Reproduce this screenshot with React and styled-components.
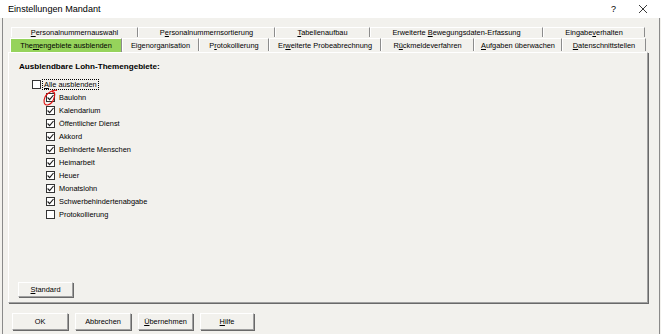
import styled, { createGlobalStyle } from 'styled-components'

const GlobalStyle = createGlobalStyle`
    * { box-sizing: border-box; }
    html, body {
        margin: 0;
        padding: 0;
        background: #f2f1ed;
    }
    body {
        font-family: "Liberation Sans", Arial, sans-serif;
        font-size: 7.4px;
        color: #000;
    }
`

const Window = styled.div`
    width: 661px;
    height: 334px;
    display: flex;
    flex-direction: column;
    background: #f2f1ed;
    overflow: hidden;
`

const TitleBar = styled.div`
    height: 18px;
    flex: none;
    display: flex;
    align-items: center;
    justify-content: space-between;
    padding: 0 13px 0 8px;
    background: #fff;
    font-size: 9.1px;
`

const TitleControls = styled.div`
    display: flex;
    align-items: center;
    gap: 22px;
    font-size: 9px;
`

const Frame = styled.div`
    flex: 1;
    display: flex;
    flex-direction: column;
    margin: 0 1px 0 2px;
    padding: 9px 11px 4px 5px;
    border-left: 1px solid #8a8a8a;
    border-right: 1px solid #8a8a8a;
`

const TabRow = styled.div`
    display: flex;
    height: ${(p) => p.$h}px;
    margin-left: ${(p) => p.$indent}px;
`

const Tab = styled.div`
    width: ${(p) => p.$w}px;
    display: flex;
    align-items: center;
    justify-content: center;
    white-space: nowrap;
    background: ${(p) => (p.$active ? '#96d35b' : 'transparent')};
    border-top: 1px solid #fff;
    border-left: 1px solid #fff;
    border-right: 1px solid #8c8c8c;
    margin-bottom: ${(p) => (p.$active ? 0 : 1)}px;
`

const Mn = styled.u`
    text-decoration: underline;
    text-underline-offset: 1px;
`

const Panel = styled.div`
    flex: 1;
    display: flex;
    flex-direction: column;
    padding: 9px 12px 5px 10px;
    border-top: 1px solid #fff;
    border-left: 1px solid #fff;
    border-right: 1px solid #a0a0a0;
    border-bottom: 1px solid #a0a0a0;
    box-shadow: 1px 1px 0 #696969;
`

const Heading = styled.div`
    font-weight: bold;
    font-size: 8.1px;
    line-height: 10px;
    margin-bottom: 6px;
`

const CheckList = styled.div`
    display: flex;
    flex-direction: column;
    padding-left: 13px;
`

const CheckRow = styled.div`
    position: relative;
    display: flex;
    align-items: center;
    gap: ${(p) => (p.$focus ? 2 : 3)}px;
    height: 13px;
    padding-left: ${(p) => (p.$indent ? 14 : 0)}px;
`

const Box = styled.span`
    width: 9px;
    height: 9px;
    flex: none;
    display: flex;
    align-items: center;
    justify-content: center;
    background: #fff;
    border: 1px solid #333;
`

const Label = styled.span`
    white-space: nowrap;
    line-height: 9px;
    padding: 0 1px;
    outline: ${(p) => (p.$focus ? '1px dotted #000' : 'none')};
`

const Annotation = styled.svg`
    position: absolute;
    left: 10px;
    top: -2px;
    z-index: 1;
    overflow: visible;
    pointer-events: none;
`

const Button = styled.div`
    width: ${(p) => p.$w}px;
    height: ${(p) => p.$h}px;
    display: flex;
    align-items: center;
    justify-content: center;
    background: #f2f1ed;
    border-top: 1px solid #fff;
    border-left: 1px solid #fff;
    border-right: 1px solid #a0a0a0;
    border-bottom: 1px solid #a0a0a0;
    box-shadow: 1px 1px 0 #696969;
`

const PanelFooter = styled.div`
    margin-top: auto;
    margin-left: -1px;
`

const ButtonBar = styled.div`
    display: flex;
    gap: 7px;
    margin-top: 10px;
    padding-left: 4px;
`

const rowOne = [
    { w: 127, label: ['', 'P', 'ersonalnummernauswahl'] },
    { w: 137, label: ['P', 'e', 'rsonalnummernsortierung'] },
    { w: 95, label: ['', 'T', 'abellenaufbau'] },
    { w: 173, label: ['Erweiterte ', 'B', 'ewegungsdaten-Erfassung'] },
    { w: 102, label: ['Eingabe', 'v', 'erhalten'] },
]

const rowTwo = [
    { w: 112, label: ['The', 'm', 'engebiete ausblenden'], active: true },
    { w: 77, label: ['Ei', 'g', 'enorganisation'] },
    { w: 70, label: ['P', 'r', 'otokollierung'] },
    { w: 112, label: ['Er', 'w', 'eiterte Probeabrechnung'] },
    { w: 93, label: ['R', 'ü', 'ckmeldeverfahren'] },
    { w: 88, label: ['', 'A', 'ufgaben überwachen'] },
    { w: 84, label: ['', 'D', 'atenschnittstellen'] },
]

const topics = [
    { name: 'Baulohn', checked: true, marked: true },
    { name: 'Kalendarium', checked: true },
    { name: 'Öffentlicher Dienst', checked: true },
    { name: 'Akkord', checked: true },
    { name: 'Behinderte Menschen', checked: true },
    { name: 'Heimarbeit', checked: true },
    { name: 'Heuer', checked: true },
    { name: 'Monatslohn', checked: true },
    { name: 'Schwerbehindertenabgabe', checked: true },
    { name: 'Protokollierung', checked: false },
]

const Mnemonic = ({ parts }) => (
    <span>
        {parts[0]}
        <Mn>{parts[1]}</Mn>
        {parts[2]}
    </span>
)

const Check = ({ checked }) => (
    <Box>
        {checked && (
            <svg width="7" height="7" viewBox="0 0 7 7">
                <path d="M0.6 3.5 L2.6 5.6 L6.5 1" fill="none" stroke="#1a1a1a" strokeWidth="1.1" />
            </svg>
        )}
    </Box>
)

const App = () => {
    return (
        <Window>
            <GlobalStyle />
            <TitleBar>
                <span>Einstellungen Mandant</span>
                <TitleControls>
                    <span>?</span>
                    <svg width="10" height="10" viewBox="0 0 10 10">
                        <path d="M1 1 L9 9 M9 1 L1 9" stroke="#222" strokeWidth="0.9" />
                    </svg>
                </TitleControls>
            </TitleBar>
            <Frame>
                <TabRow $h={11} $indent={3}>
                    {rowOne.map((t) => (
                        <Tab key={t.label.join('')} $w={t.w}>
                            <Mnemonic parts={t.label} />
                        </Tab>
                    ))}
                </TabRow>
                <TabRow $h={14} $indent={2}>
                    {rowTwo.map((t) => (
                        <Tab key={t.label.join('')} $w={t.w} $active={t.active}>
                            <Mnemonic parts={t.label} />
                        </Tab>
                    ))}
                </TabRow>
                <Panel>
                    <Heading>Ausblendbare Lohn-Themengebiete:</Heading>
                    <CheckList>
                        <CheckRow $focus>
                            <Check checked={false} />
                            <Label $focus>
                                <Mn>A</Mn>lle ausblenden
                            </Label>
                        </CheckRow>
                        {topics.map((t) => (
                            <CheckRow key={t.name} $indent>
                                <Check checked={t.checked} />
                                <Label>{t.name}</Label>
                                {t.marked && (
                                    <Annotation width="18" height="19" viewBox="0 0 18 19">
                                        <path
                                            d="M15 1.5 C11.5 0.5 5 3.5 3 8 C1 12.5 2 16.5 5.5 16 C9 15.5 11.5 11.5 12.5 7.5 C13.2 4.5 12.5 2.2 10 3"
                                            fill="none"
                                            stroke="#e01010"
                                            strokeWidth="1.1"
                                        />
                                    </Annotation>
                                )}
                            </CheckRow>
                        ))}
                    </CheckList>
                    <PanelFooter>
                        <Button $w={55} $h={15}>
                            <span>
                                <Mn>S</Mn>tandard
                            </span>
                        </Button>
                    </PanelFooter>
                </Panel>
                <ButtonBar>
                    <Button $w={56} $h={17}>OK</Button>
                    <Button $w={56} $h={17}>Abbrechen</Button>
                    <Button $w={55} $h={17}>
                        <span>
                            <Mn>Ü</Mn>bernehmen
                        </span>
                    </Button>
                    <Button $w={54} $h={17}>
                        <span>
                            <Mn>H</Mn>ilfe
                        </span>
                    </Button>
                </ButtonBar>
            </Frame>
        </Window>
    )
}

export default App
